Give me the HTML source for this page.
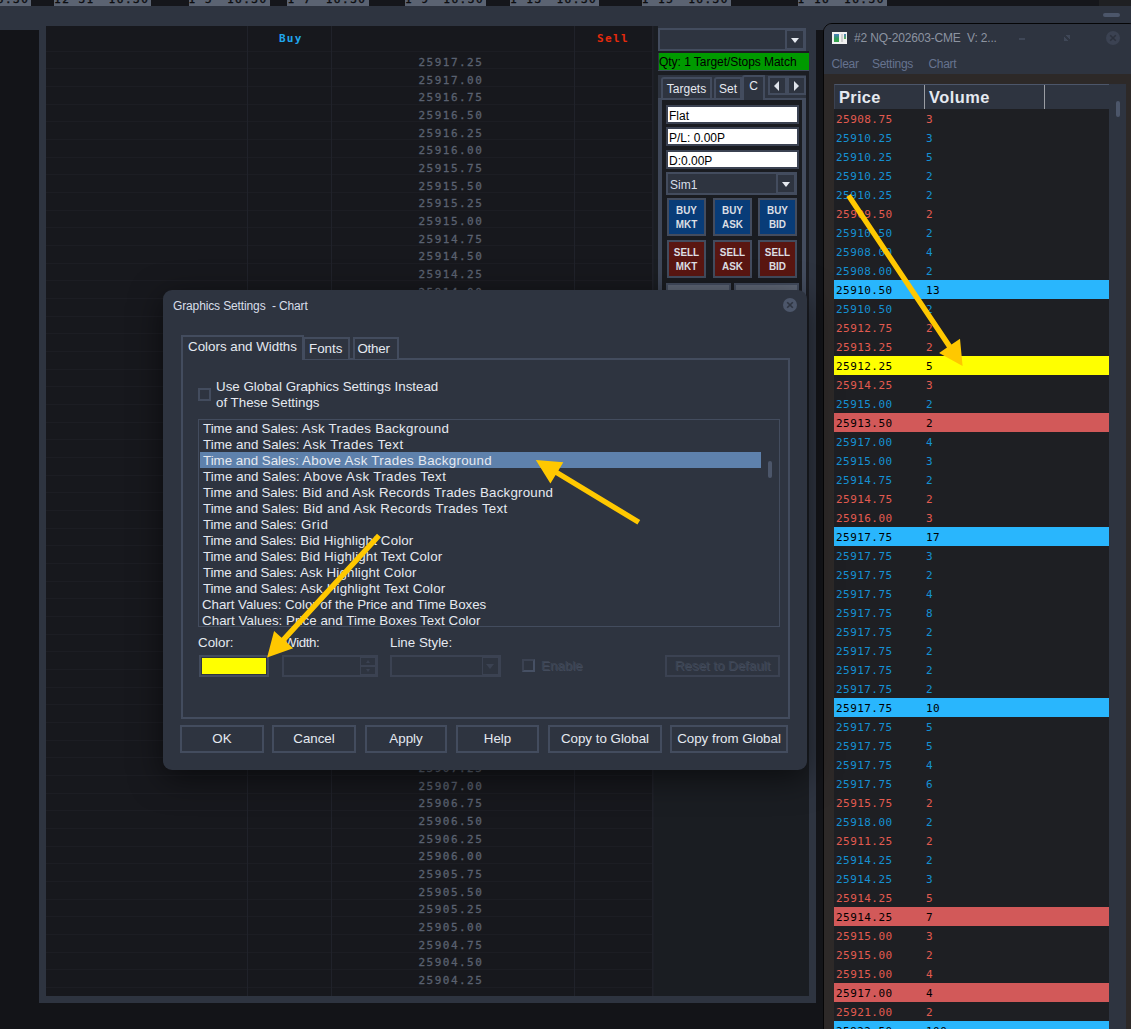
<!DOCTYPE html>
<html lang="en"><head><meta charset="utf-8"><title>Graphics Settings - Chart</title>
<style>
*{box-sizing:border-box;margin:0;padding:0}
html,body{width:1131px;height:1029px;overflow:hidden;background:#131418;font-family:"Liberation Sans",sans-serif}
body{position:relative}
body div,body i,body b,body s,body u,body em{position:absolute;display:block;font-style:normal;text-decoration:none}
/* top strip */
#strip{left:0;top:0;width:1131px;height:6px;background:#15161b;overflow:hidden}
#strip .tb{top:0;height:6px;background:#5b6372;overflow:hidden}
#strip .tb span{position:absolute;left:0px;top:-7.4px;font:11px "DejaVu Sans Mono","Liberation Mono",monospace;letter-spacing:1.53px;color:#0c0d10;-webkit-text-stroke:0.4px #0c0d10;white-space:nowrap}
#strip .tdark{left:1099px;top:0;width:32px;height:6px;background:#1f2023}
#band{left:0;top:6px;width:1131px;height:24px;background:#2e3440}
#pill{left:1103px;top:13px;width:17px;height:4px;border-radius:2px;background:#4c566a}
#frame{left:39px;top:6px;width:777px;height:997px;background:#2e3440}
/* chart */
#chart{left:46px;top:26px;width:763px;height:970px;background:#17181d;overflow:hidden}
#grid{left:0;top:0;width:606px;height:970px}
#grid i{left:0;width:606px;height:1px;background:#1c1d23}
#rightarea{left:607px;top:0;width:156px;height:970px;background:#1a1d22}
#pdark{left:612px;top:45px;width:151px;height:300px;background:#1b1d23}
.vl{top:0;width:1px;height:970px;background:#20222a}
.hd{top:6px;font:bold 11px "DejaVu Sans Mono","Liberation Mono",monospace;letter-spacing:1.5px;white-space:nowrap}
.hd.buy{left:233px;color:#20a6ec;letter-spacing:1.2px}
.hd.sell{left:551px;color:#e62a0c;letter-spacing:1.35px}
#prices{left:0;top:0;width:606px;height:970px}
#prices div{left:372.5px;margin-top:1px;height:16px;line-height:16px;font:11px/16px "DejaVu Sans Mono","Liberation Mono",monospace;letter-spacing:1.48px;color:#5a6170;-webkit-text-stroke:0.3px #5a6170;white-space:nowrap}
/* DOM panel */
#panel{left:612px;top:0;width:151px;height:320px}
#pbg{left:0;top:0;width:151px;height:45px;background:#2e3440}
#pgap{left:0;top:45px;width:151px;height:4px;background:#1b1d22}
#pgap2{left:0;top:25px;width:151px;height:2px;background:#1b1d22}
.combo{background:#2e3440;border:2px solid #434c5e;color:#d8dee9;font-size:12px}
.combo span{position:absolute;left:2px;top:3.5px}
.combo .dd{right:0;top:0;width:19px;height:100%;border:1px solid #434c5e;border-left:2px solid #434c5e}
.combo .dd s{left:4px;top:7px;width:0;height:0;border-left:4px solid transparent;border-right:4px solid transparent;border-top:5px solid #e5e9f0}
#qty{left:1px;top:27px;width:150px;height:17px;background:#009a00;color:#000;font-size:12px;line-height:18px;letter-spacing:-0.04px;white-space:nowrap;overflow:hidden;padding-left:0}
#qtyb{left:0;top:44px;width:151px;height:1px;background:#434c5e}
#tabs{left:0;top:49px;width:148px;height:24px;background:#2e3440}
.tab{top:2px;height:22px;border:2px solid #434c5e;border-bottom:none;border-radius:3px 1px 0 0;color:#e5e9f0;font-size:12px;line-height:20px;text-align:center;background:#2e3440}
.tab.sel{top:0;height:25px;line-height:19px;z-index:2}
.arr{top:1px;width:19px;height:19px;border:2px solid #434c5e;background:#2e3440}
.arr u{top:3px;width:0;height:0;border-top:5px solid transparent;border-bottom:5px solid transparent}
.arr u.l{left:4px;border-right:5.5px solid #dfe3ea}
.arr u.r{left:5px;border-left:5.5px solid #dfe3ea}
#tbody{left:0;top:72px;width:148px;height:240px;border:4px solid #434c5e;border-top-width:2px;border-left-color:#3f4758;background:#1a1c21}
.fld{left:4px;width:133px;height:19px;border:2px solid #3b4252;background:#fff;color:#000;font-size:12px;line-height:18px;padding-left:1px;white-space:nowrap}
.btn{width:39px;height:38px;border:2px solid #434c5e;color:#dcdfe4;font-weight:bold;font-size:11px;line-height:14px;text-align:center;padding-top:3px}
.btn span{display:block;transform:scaleX(.9)}
.btn.bb{background:#083c78}
.btn.bs{background:#5a1611}
.gbtn{width:65px;height:30px;border:2px solid #434c5e;background:#5f6776}
/* T&S */
#ts{left:823px;top:23px;width:315px;height:1030px;background:#2d2928;border:1px solid #050506;border-radius:9px 9px 0 0;overflow:hidden}
#tstitle{left:0;top:0;width:330px;height:50px;background:#2e3440}
#tsicon{left:8px;top:8px;width:15px;height:12px;background:#f1f1f1}
#tsicon i{position:absolute}
#tsicon .a{left:2px;top:2px;width:5px;height:8px;background:linear-gradient(#4a7fc0,#2e9a58 60%,#3aa84a)}
#tsicon .b{left:9px;top:2px;width:2px;height:8px;background:#d0d0d0}
#tsicon .c{left:12px;top:2px;width:2px;height:5px;background:linear-gradient(#4a7fc0,#5ab050)}
#tstext{left:30px;top:7px;font-size:12px;letter-spacing:-0.17px;color:#8c93a0;white-space:nowrap}
#tsmin{left:195px;top:14px;width:6px;height:2px;background:#3f4757}
#tsmax{left:240px;top:11px;width:6px;height:6px;background:linear-gradient(45deg,#3f4757 36%,#2e3440 36%,#2e3440 64%,#3f4757 64%)}
#tsclose{left:282px;top:7px;width:14px;height:14px}
#tsmenu{left:0;top:26px;width:330px;height:24px;font-size:12px;letter-spacing:-0.3px;color:#66738f}
#tsmenu span{position:absolute;top:7px}
#tshead{left:10px;top:60px;width:275px;height:25px;background:#2e3440;border-top:1px solid #4c566a;border-left:1px solid #3b4252;color:#e5e9f0;font-weight:bold;font-size:16.4px}
#tshead .h1{left:4px;top:3px;letter-spacing:.3px}
#tshead .h2{left:94px;top:3px;letter-spacing:.5px}
#tshead b{top:0;width:1px;height:24px;background:#9a9da3}
#tsscroll{left:285px;top:60px;width:17px;height:970px;background:#2e3440}
#tsscroll i{left:7px;top:17px;width:4px;height:16px;border-radius:2px;background:#4c566a}
#tsrows{left:10px;top:85px;width:275px;height:950px;background:#1e1f23}
#tsrows .r{position:relative;height:19px;width:275px;font:11px/19px "DejaVu Sans Mono","Liberation Mono",monospace;letter-spacing:0.45px;white-space:nowrap}
#tsrows .r span{position:absolute;left:2px;top:1px}
#tsrows .r span.v{left:92px}
.r.cb{color:#1591d3}.r.cr{color:#e35b50}
.r.cHB{background:#29b6fd;color:#000}.r.cHR{background:#d25959;color:#000}.r.cHY{background:#ffff00;color:#000}
/* dialog */
#dlg{left:163px;top:290px;width:644px;height:480px;background:#2e3440;border-radius:9px;box-shadow:0 8px 32px rgba(0,0,0,.55)}
#dtitle{left:10px;top:9px;font-size:12px;letter-spacing:-0.13px;color:#d8dee9;white-space:nowrap}
#dclose{left:620px;top:8px;width:14px;height:14px}
#dbody{left:18px;top:68px;width:609px;height:361px;border:2px solid #434c5e}
.dtab{border:2px solid #434c5e;border-bottom:none;background:#2e3440;color:#e5e9f0;font-size:13.33px;text-align:center;white-space:nowrap}
.dtab.sel{z-index:2}
.chk{width:13px;height:13px;border:2px solid #434c5e;background:#2e3440}
#useglobal{left:53px;top:89px;font-size:13.33px;line-height:16px;color:#e5e9f0;white-space:nowrap}
#list{left:35px;top:129px;width:582px;height:208px;border:1px solid #434c5e;overflow:hidden}
#list div{position:relative;left:1px;width:561px;height:16px;line-height:18px;font-size:13.33px;color:#e5e9f0;padding-left:3px;white-space:nowrap;letter-spacing:.16px;overflow:visible}
#list div.sel{background:#5e81ac}
#list em{left:569px;top:41px;width:4px;height:17px;border-radius:2px;background:#4c566a}
.lbl{font-size:13.33px;color:#e5e9f0;white-space:nowrap}
.lbl.dis,.dbtn.dis{color:#3c4453;text-shadow:1px 1px 0 #434b5c}
#swatch{left:36px;top:365px;width:70px;height:22px;border:2px solid #434c5e}
#swatch i{left:1px;top:1px;width:64px;height:16px;background:#ffff00;display:block}
#spin{left:119px;top:365px;width:96px;height:22px;border:2px solid #3b4252}
#spin .sb{right:0;width:16px;height:9px;border:1px solid #3b4252}
#spin .sb s{left:5px;top:2px;width:0;height:0;border-left:2.5px solid transparent;border-right:2.5px solid transparent}
#spin .sb s.up{border-bottom:3px solid #3b4252}
#spin .sb s.dn{border-top:3px solid #3b4252}
#lstyle{left:227px;top:365px;width:111px;height:22px;border:2px solid #3b4252}
#lstyle .dd2{right:0;top:0;width:17px;height:18px;border:1px solid #3b4252}
#lstyle .dd2 s{left:3px;top:6px;width:0;height:0;border-left:4px solid transparent;border-right:4px solid transparent;border-top:5px solid #3b4252}
.chk.dis{border-color:#3b4252 #465064 #465064 #3b4252}
.dbtn{height:28px;border:2px solid #434c5e;color:#e5e9f0;font-size:13.33px;line-height:24px;text-align:center;white-space:nowrap}
.dbtn.dis{border-color:#3b4252;line-height:18px}
svg{display:block}
#arrows{position:absolute;left:0;top:0}

</style></head><body>
<div id="strip"><div class="tb" style="left:-66px;width:97px"><span>12<span style="position:relative;left:0;top:-2px">-</span>30&nbsp;&nbsp;<span style="position:static;margin-left:-2.5px">16:30</span></span></div><div class="tb" style="left:54px;width:97px"><span>12<span style="position:relative;left:0;top:-2px">-</span>31&nbsp;&nbsp;<span style="position:static;margin-left:-2.5px">16:30</span></span></div><div class="tb" style="left:188.6px;width:81.2px"><span>1<span style="position:relative;left:0;top:-2px">-</span>5&nbsp;&nbsp;<span style="position:static;margin-left:-2.5px">16:30</span></span></div><div class="tb" style="left:287.4px;width:81.6px"><span>1<span style="position:relative;left:0;top:-2px">-</span>7&nbsp;&nbsp;<span style="position:static;margin-left:-2.5px">16:30</span></span></div><div class="tb" style="left:405px;width:81px"><span>1<span style="position:relative;left:0;top:-2px">-</span>9&nbsp;&nbsp;<span style="position:static;margin-left:-2.5px">16:30</span></span></div><div class="tb" style="left:510px;width:89px"><span>1<span style="position:relative;left:0;top:-2px">-</span>13&nbsp;&nbsp;<span style="position:static;margin-left:-2.5px">16:30</span></span></div><div class="tb" style="left:641.7px;width:89.1px"><span>1<span style="position:relative;left:0;top:-2px">-</span>15&nbsp;&nbsp;<span style="position:static;margin-left:-2.5px">16:30</span></span></div><div class="tb" style="left:797.6px;width:89.1px"><span>1<span style="position:relative;left:0;top:-2px">-</span>16&nbsp;&nbsp;<span style="position:static;margin-left:-2.5px">16:30</span></span></div><div class="tdark"></div></div>
<div id="band"></div><div id="pill"></div>
<div id="frame"></div>
<div id="chart"><div id="grid"><i style="top:25px"></i><i style="top:42px"></i><i style="top:60px"></i><i style="top:78px"></i><i style="top:95px"></i><i style="top:113px"></i><i style="top:131px"></i><i style="top:148px"></i><i style="top:166px"></i><i style="top:184px"></i><i style="top:201px"></i><i style="top:219px"></i><i style="top:237px"></i><i style="top:254px"></i><i style="top:272px"></i><i style="top:290px"></i><i style="top:307px"></i><i style="top:325px"></i><i style="top:343px"></i><i style="top:360px"></i><i style="top:378px"></i><i style="top:396px"></i><i style="top:413px"></i><i style="top:431px"></i><i style="top:449px"></i><i style="top:466px"></i><i style="top:484px"></i><i style="top:502px"></i><i style="top:519px"></i><i style="top:537px"></i><i style="top:555px"></i><i style="top:572px"></i><i style="top:590px"></i><i style="top:608px"></i><i style="top:625px"></i><i style="top:643px"></i><i style="top:661px"></i><i style="top:678px"></i><i style="top:696px"></i><i style="top:714px"></i><i style="top:731px"></i><i style="top:749px"></i><i style="top:767px"></i><i style="top:784px"></i><i style="top:802px"></i><i style="top:820px"></i><i style="top:837px"></i><i style="top:855px"></i><i style="top:873px"></i><i style="top:890px"></i><i style="top:908px"></i><i style="top:926px"></i><i style="top:943px"></i><i style="top:961px"></i></div><div id="rightarea"></div><div id="pdark"></div><b class="vl" style="left:201px"></b><b class="vl" style="left:285px"></b><b class="vl" style="left:528px"></b><b class="vl" style="left:606px"></b><b class="vl" style="left:607px;opacity:.6"></b><div class="hd buy">Buy</div><div class="hd sell">Sell</div><div id="prices"><div style="top:28.0px">25917.25</div><div style="top:45.7px">25917.00</div><div style="top:63.3px">25916.75</div><div style="top:81.0px">25916.50</div><div style="top:98.6px">25916.25</div><div style="top:116.3px">25916.00</div><div style="top:133.9px">25915.75</div><div style="top:151.6px">25915.50</div><div style="top:169.2px">25915.25</div><div style="top:186.9px">25915.00</div><div style="top:204.5px">25914.75</div><div style="top:222.2px">25914.50</div><div style="top:239.8px">25914.25</div><div style="top:257.5px">25914.00</div><div style="top:275.1px">25913.75</div><div style="top:292.8px">25913.50</div><div style="top:310.4px">25913.25</div><div style="top:328.1px">25913.00</div><div style="top:345.7px">25912.75</div><div style="top:363.4px">25912.50</div><div style="top:381.0px">25912.25</div><div style="top:398.7px">25912.00</div><div style="top:416.3px">25911.75</div><div style="top:434.0px">25911.50</div><div style="top:451.6px">25911.25</div><div style="top:469.3px">25911.00</div><div style="top:487.0px">25910.75</div><div style="top:504.6px">25910.50</div><div style="top:522.3px">25910.25</div><div style="top:539.9px">25910.00</div><div style="top:557.6px">25909.75</div><div style="top:575.2px">25909.50</div><div style="top:592.9px">25909.25</div><div style="top:610.5px">25909.00</div><div style="top:628.2px">25908.75</div><div style="top:645.8px">25908.50</div><div style="top:663.5px">25908.25</div><div style="top:681.1px">25908.00</div><div style="top:698.8px">25907.75</div><div style="top:716.4px">25907.50</div><div style="top:734.1px">25907.25</div><div style="top:751.7px">25907.00</div><div style="top:769.4px">25906.75</div><div style="top:787.0px">25906.50</div><div style="top:804.7px">25906.25</div><div style="top:822.3px">25906.00</div><div style="top:840.0px">25905.75</div><div style="top:857.6px">25905.50</div><div style="top:875.3px">25905.25</div><div style="top:892.9px">25905.00</div><div style="top:910.6px">25904.75</div><div style="top:928.3px">25904.50</div><div style="top:945.9px">25904.25</div></div>
<div id="panel"><div id="pbg"></div>
<div class="combo" style="left:0;top:2px;width:148px;height:23px"><div class="dd"><s></s></div></div>
<div id="pgap2"></div><div id="qty">Qty: 1 Target/Stops Match</div><div id="qtyb"></div><div id="pgap"></div>
<div id="tabs">
 <div class="tab" style="left:3px;width:51px">Targets</div>
 <div class="tab" style="left:56px;width:28px">Set</div>
 <div class="tab sel" style="left:84px;width:23px">C</div>
 <div class="arr" style="left:110px"><u class="l"></u></div>
 <div class="arr" style="left:129px"><u class="r"></u></div>
</div>
<div id="tbody">
 <div class="fld" style="top:5px">Flat</div>
 <div class="fld" style="top:27px">P/L: 0.00P</div>
 <div class="fld" style="top:50px">D:0.00P</div>
 <div class="combo" style="left:4px;top:72px;width:131px;height:23px"><span>Sim1</span><div class="dd"><s></s></div></div>
 <div class="btn bb" style="left:5px;top:98px"><span>BUY<br>MKT</span></div>
 <div class="btn bb" style="left:51px;top:98px"><span>BUY<br>ASK</span></div>
 <div class="btn bb" style="left:96px;top:98px"><span>BUY<br>BID</span></div>
 <div class="btn bs" style="left:5px;top:140px"><span>SELL<br>MKT</span></div>
 <div class="btn bs" style="left:51px;top:140px"><span>SELL<br>ASK</span></div>
 <div class="btn bs" style="left:96px;top:140px"><span>SELL<br>BID</span></div>
 <div class="gbtn" style="left:4px;top:183px"></div>
 <div class="gbtn" style="left:72px;top:183px"></div>
</div>
</div>
</div>
<div id="ts">
<div id="tstitle">
 <div id="tsicon"><i class="a"></i><i class="b"></i><i class="c"></i></div>
 <div id="tstext">#2 NQ-202603-CME&nbsp; V: 2...</div>
 <div id="tsmin"></div><div id="tsmax"></div><div id="tsclose"><svg width="14" height="14" viewBox="0 0 14 14"><circle cx="7" cy="7" r="7" fill="#3b4252"/><line x1="4.2" y1="4.2" x2="9.8" y2="9.8" stroke="#2c313d" stroke-width="1.6"/><line x1="9.8" y1="4.2" x2="4.2" y2="9.8" stroke="#2c313d" stroke-width="1.6"/></svg></div>
 <div id="tsmenu"><span style="left:7.5px">Clear</span><span style="left:48px">Settings</span><span style="left:104.5px">Chart</span></div>
</div>
<div id="tshead"><div class="h1">Price</div><div class="h2">Volume</div><b style="left:89px"></b><b style="left:209px"></b></div>
<div id="tsscroll"><i></i></div>
<div id="tsrows">
<div class="r cr"><span>25908.75</span><span class="v">3</span></div><div class="r cb"><span>25910.25</span><span class="v">3</span></div><div class="r cb"><span>25910.25</span><span class="v">5</span></div><div class="r cb"><span>25910.25</span><span class="v">2</span></div><div class="r cb"><span>25910.25</span><span class="v">2</span></div><div class="r cr"><span>25909.50</span><span class="v">2</span></div><div class="r cb"><span>25910.50</span><span class="v">2</span></div><div class="r cb"><span>25908.00</span><span class="v">4</span></div><div class="r cb"><span>25908.00</span><span class="v">2</span></div><div class="r cHB"><span>25910.50</span><span class="v">13</span></div><div class="r cb"><span>25910.50</span><span class="v">2</span></div><div class="r cr"><span>25912.75</span><span class="v">2</span></div><div class="r cr"><span>25913.25</span><span class="v">2</span></div><div class="r cHY"><span>25912.25</span><span class="v">5</span></div><div class="r cr"><span>25914.25</span><span class="v">3</span></div><div class="r cb"><span>25915.00</span><span class="v">2</span></div><div class="r cHR"><span>25913.50</span><span class="v">2</span></div><div class="r cb"><span>25917.00</span><span class="v">4</span></div><div class="r cb"><span>25915.00</span><span class="v">3</span></div><div class="r cb"><span>25914.75</span><span class="v">2</span></div><div class="r cr"><span>25914.75</span><span class="v">2</span></div><div class="r cr"><span>25916.00</span><span class="v">3</span></div><div class="r cHB"><span>25917.75</span><span class="v">17</span></div><div class="r cb"><span>25917.75</span><span class="v">3</span></div><div class="r cb"><span>25917.75</span><span class="v">2</span></div><div class="r cb"><span>25917.75</span><span class="v">4</span></div><div class="r cb"><span>25917.75</span><span class="v">8</span></div><div class="r cb"><span>25917.75</span><span class="v">2</span></div><div class="r cb"><span>25917.75</span><span class="v">2</span></div><div class="r cb"><span>25917.75</span><span class="v">2</span></div><div class="r cb"><span>25917.75</span><span class="v">2</span></div><div class="r cHB"><span>25917.75</span><span class="v">10</span></div><div class="r cb"><span>25917.75</span><span class="v">5</span></div><div class="r cb"><span>25917.75</span><span class="v">5</span></div><div class="r cb"><span>25917.75</span><span class="v">4</span></div><div class="r cb"><span>25917.75</span><span class="v">6</span></div><div class="r cr"><span>25915.75</span><span class="v">2</span></div><div class="r cb"><span>25918.00</span><span class="v">2</span></div><div class="r cr"><span>25911.25</span><span class="v">2</span></div><div class="r cb"><span>25914.25</span><span class="v">2</span></div><div class="r cb"><span>25914.25</span><span class="v">3</span></div><div class="r cr"><span>25914.25</span><span class="v">5</span></div><div class="r cHR"><span>25914.25</span><span class="v">7</span></div><div class="r cr"><span>25915.00</span><span class="v">3</span></div><div class="r cr"><span>25915.00</span><span class="v">2</span></div><div class="r cr"><span>25915.00</span><span class="v">4</span></div><div class="r cHR"><span>25917.00</span><span class="v">4</span></div><div class="r cr"><span>25921.00</span><span class="v">2</span></div><div class="r cHB"><span>25922.50</span><span class="v">100</span></div></div></div>
<div id="dlg">
<div id="dtitle">Graphics Settings&nbsp; - Chart</div>
<div id="dclose"><svg width="14" height="14" viewBox="0 0 14 14"><circle cx="7" cy="7" r="7" fill="#4c566a"/><line x1="4.2" y1="4.2" x2="9.8" y2="9.8" stroke="#2e3440" stroke-width="1.6"/><line x1="9.8" y1="4.2" x2="4.2" y2="9.8" stroke="#2e3440" stroke-width="1.6"/></svg></div>
<div id="dbody"></div>
<div class="dtab sel" style="left:18px;top:45px;width:123px;height:25px;line-height:19px">Colors and Widths</div>
<div class="dtab" style="left:140px;top:47px;width:47px;height:22px;line-height:19px;text-align:left;padding-left:4px">Fonts</div>
<div class="dtab" style="left:190px;top:47px;width:46px;height:22px;line-height:19px;text-align:left;padding-left:2.4px;letter-spacing:-0.2px">Other</div>
<div class="chk" style="left:35px;top:98px"></div>
<div id="useglobal">Use Global Graphics Settings Instead<br>of These Settings</div>
<div id="list">
<div><span style="letter-spacing:-0.02px">Time and Sales:</span><span style="letter-spacing:0.283px"> Ask Trades Background</span></div><div><span style="letter-spacing:0.05px">Time and Sales:</span><span style="letter-spacing:0.399px"> Ask Trades Text</span></div><div class="sel"><span style="letter-spacing:0.004px">Time and Sales:</span><span style="letter-spacing:0.28px"> Above Ask Trades Background</span></div><div><span style="letter-spacing:0.066px">Time and Sales:</span><span style="letter-spacing:0.369px"> Above Ask Trades Text</span></div><div><span style="letter-spacing:-0.035px">Time and Sales:</span><span style="letter-spacing:0.216px"> Bid and Ask Records Trades Background</span></div><div><span style="letter-spacing:0.008px">Time and Sales:</span><span style="letter-spacing:0.272px"> Bid and Ask Records Trades Text</span></div><div><span style="letter-spacing:-0.146px">Time and Sales:</span><span style="letter-spacing:0.574px"> Grid</span></div><div><span style="letter-spacing:-0.164px">Time and Sales:</span><span style="letter-spacing:0.151px"> Bid Highlight Color</span></div><div><span style="letter-spacing:-0.143px">Time and Sales:</span><span style="letter-spacing:0.145px"> Bid Highlight Text Color</span></div><div><span style="letter-spacing:-0.138px">Time and Sales:</span><span style="letter-spacing:0.177px"> Ask Highlight Color</span></div><div><span style="letter-spacing:-0.12px">Time and Sales:</span><span style="letter-spacing:0.168px"> Ask Highlight Text Color</span></div><div style="letter-spacing:-0.033px;padding-left:2px">Chart Values: Color of the Price and Time Boxes</div><div style="letter-spacing:0.044px;padding-left:2px">Chart Values: Price and Time Boxes Text Color</div><em></em></div>
<div class="lbl" style="left:35px;top:345px">Color:</div>
<div class="lbl" style="left:121px;top:345px;letter-spacing:-0.4px">Width:</div>
<div class="lbl" style="left:227px;top:345px">Line Style:</div>
<div id="swatch"><i></i></div>
<div id="spin"><div class="sb" style="top:0"><s class="up"></s></div><div class="sb" style="top:9px"><s class="dn"></s></div></div>
<div id="lstyle"><div class="dd2"><s></s></div></div>
<div class="chk dis" style="left:359px;top:369px"></div>
<div class="lbl dis" style="left:378px;top:368px">Enable</div>
<div class="dbtn dis" style="left:502px;top:365px;width:115px;height:22px">Reset to Default</div>
<div class="dbtn" style="left:17px;top:435px;width:84px">OK</div>
<div class="dbtn" style="left:109px;top:435px;width:84px">Cancel</div>
<div class="dbtn" style="left:202px;top:435px;width:82px">Apply</div>
<div class="dbtn" style="left:293px;top:435px;width:83px">Help</div>
<div class="dbtn" style="left:385px;top:435px;width:114px">Copy to Global</div>
<div class="dbtn" style="left:507px;top:435px;width:118px">Copy from Global</div>
</div>
<svg id="arrows" width="1131" height="1029" viewBox="0 0 1131 1029">
<g fill="#ffc800" stroke="none">
<path d="M846.3 197.0 L947.0 347.6 L939.1 353.0 L962.6 366.0 L960.0 338.8 L951.5 344.6 L850.7 194.0 Z"/><path d="M640.2 520.0 L558.4 470.4 L563.3 462.3 L535.8 459.9 L550.4 483.5 L555.6 475.0 L637.4 524.6 Z"/><path d="M377.0 533.7 L281.6 637.8 L274.1 631.1 L267.1 657.6 L293.2 648.2 L285.6 641.4 L381.0 537.3 Z"/>
</g></svg>
</body></html>
